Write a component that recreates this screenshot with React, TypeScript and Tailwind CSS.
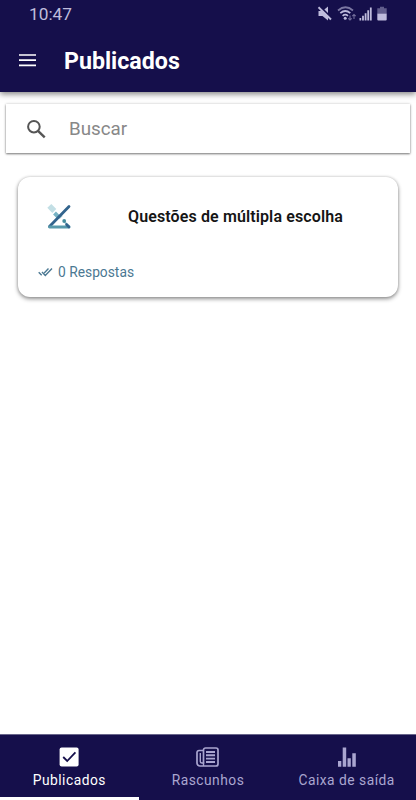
import React, { useState } from "react";

const TABS = [
  { id: "published", label: "Publicados", Icon: CheckboxIcon },
  { id: "drafts", label: "Rascunhos", Icon: NewspaperIcon },
  { id: "outbox", label: "Caixa de saída", Icon: StatsIcon },
];

function CheckboxIcon() {
  return (
    <svg className="h-5 w-5" viewBox="0 0 20 20" fill="none">
      <rect x="0.6" y="0.4" width="19" height="19.2" rx="2" fill="currentColor" />
      <path d="M4.2 10l4 4 8.2-8.6" stroke="#150f4b" strokeWidth="1.8" />
    </svg>
  );
}

function NewspaperIcon() {
  return (
    <svg className="h-5 w-[23px]" viewBox="0 0 23 20" fill="none" stroke="currentColor">
      <path d="M7.5 16.5V3a2 2 0 012-2H20a2 2 0 012 2v14a2 2 0 01-2 2H4a3 3 0 01-3-3V5.5a2 2 0 012-2h4.5" strokeWidth="1.7" />
      <path d="M4.3 6v8.5q0 1.500 1.600 1.500h1.600v3" strokeWidth="1.4" />
      <path d="M10 5h9M10 8.300h9M10 11.600h9M10 15h9" strokeWidth="1.9" />
    </svg>
  );
}

function StatsIcon() {
  return (
    <svg className="h-5 w-5" viewBox="0 0 20 20" fill="currentColor">
      <path d="M1 14h3.300v5.700H1zM5.700.5h3.500v19.200H5.700zM10.500 11.200h3.300v8.500h-3.300zM15.300 6.200h3.500v13.500h-3.500z" />
    </svg>
  );
}

function StatusBar() {
  return (
    <div className="flex h-7 items-center justify-between pl-[29px] pr-[28px] text-[#bfbcdc]">
      <span className="text-[17.3px] leading-7">10:47</span>
      <svg className="h-7 w-[74px]" viewBox="314 0 74 28" fill="currentColor">
        <path d="M318.500 11h4l5.500-4.500v14l-5.500-4.500h-4z" />
        <path d="M319.500 6l12 12" stroke="#150f4b" strokeWidth="2" />
        <path d="M318.500 7.300l12.500 12.200" stroke="currentColor" strokeWidth="1.9" />
        <g fill="none" stroke="currentColor" strokeWidth="1.7">
          <path d="M338 10.500q7.500-6.500 15 0" opacity=".6" />
          <path d="M340.300 13.200q5-4.400 10 0M342.600 15.800q2.700-2.200 5.400 0" />
        </g>
        <circle cx="345.2" cy="18.3" r="1.5" />
        <path
          d="M350 15.500V20M348.300 18.300l1.700 1.700 1.700-1.700M354 19v-4.500M352.300 16.200l1.700-1.700 1.700 1.700"
          fill="none"
          stroke="currentColor"
          strokeWidth="1.1"
          opacity=".55"
        />
        <path d="M359.500 18h1.700v2.500h-1.700zM362.100 15.800h1.800v4.700h-1.800zM364.700 13.300h1.800v7.200h-1.800zM367.300 10.300h1.800v10.200h-1.800zM369.900 7.500h1.800v13h-1.800z" />
        <path d="M377.300 8.300h2.700V6.800h4v1.500h2.700v5.200h-9.400z" opacity=".45" />
        <path d="M377.300 13.500h9.400v6q0 1-1 1h-7.400q-1 0-1-1z" />
      </svg>
    </div>
  );
}

function FormLogo() {
  return (
    <svg className="mb-0.5 h-[26px] w-[26px]" viewBox="46 203 26 26" fill="none">
      <path d="M47.300 207.800l4-3.800 5 5-4 4z" fill="#c3dfe5" />
      <path d="M54.500 213l4.500 4.500" stroke="#78b3c4" strokeWidth="4" />
      <path d="M59 218.300l3-3" stroke="#a5cbd4" strokeWidth="2" />
      <path d="M49.500 226.500l19.500-20" stroke="#32648d" strokeWidth="2.8" strokeLinecap="round" />
      <path d="M64.500 222l5 4.500" stroke="#a5cbd4" strokeWidth="1.8" />
      <circle cx="64.2" cy="221" r="1.9" fill="#458d9d" />
      <path d="M49.500 227H69" stroke="#5799ab" strokeWidth="2.9" strokeLinecap="round" />
      <path d="M66.500 224.500l2.500 2.500" stroke="#32648d" strokeWidth="2.6" strokeLinecap="round" />
    </svg>
  );
}

function FormCard({ title, answers }: { title: string; answers: number }) {
  return (
    <article className="mx-[18px] mt-6 h-[120px] rounded-xl bg-white shadow-[0_2px_4px_rgba(0,0,0,0.42),0_0_3px_rgba(0,0,0,0.18)]">
      <div className="flex h-20 items-center pl-7">
        <FormLogo />
        <h2 className="ml-14 whitespace-nowrap text-[16px] font-semibold tracking-[0.12px] text-[#151515]">{title}</h2>
      </div>
      <div className="flex h-[30px] items-center gap-[5px] pl-5 text-[#4b7892]">
        <svg className="h-3.5 w-[15px]" viewBox="0 0 15 14" fill="none" stroke="currentColor" strokeWidth="1.4">
          <path d="M.7 7.200l3 3M4 7l3.300 3.400 6.700-6.900M6.200 7.900l4.300-4.400" />
        </svg>
        <span className="text-[13.8px]">{answers} Respostas</span>
      </div>
    </article>
  );
}

export default function App() {
  const [active, setActive] = useState("published");
  const [query, setQuery] = useState("");

  return (
    <div className="flex h-screen w-full flex-col overflow-hidden bg-white font-['Roboto',sans-serif]">
      <header className="z-10 h-[92px] shrink-0 bg-[#150f4b] shadow-[0_2px_6px_rgba(0,0,0,0.5)]">
        <StatusBar />
        <div className="flex h-16 items-center pl-[19px] text-white">
          <button aria-label="Menu">
            <svg className="h-4 w-[17px]" viewBox="0 0 17 16" stroke="currentColor" strokeWidth="1.7">
              <path d="M0 3h17M0 8.200h17M0 13.400h17" />
            </svg>
          </button>
          <h1 className="ml-7 pt-[3px] text-[23.2px] font-bold">Publicados</h1>
        </div>
      </header>

      <main className="flex-1">
        <div className="mx-1.5 mt-3 flex h-[49px] items-center bg-white pl-5 shadow-[0_1px_2px_rgba(0,0,0,0.5),0_0_3px_rgba(0,0,0,0.15)]">
          <svg className="h-5 w-5 shrink-0" viewBox="0 0 20 20" fill="none" stroke="#555" strokeWidth="2">
            <circle cx="7.9" cy="7.7" r="5.8" />
            <path d="M12 11.800l6.700 6.500" strokeWidth="2.4" />
          </svg>
          <input
            className="ml-[23px] w-full bg-transparent pt-px text-[18.8px] outline-none placeholder:text-[#888]"
            placeholder="Buscar"
            value={query}
            onChange={(e) => setQuery(e.target.value)}
          />
        </div>
        <FormCard title="Questões de múltipla escolha" answers={0} />
      </main>

      <nav className="grid h-[66px] shrink-0 grid-cols-3 border-t border-[#69668b] bg-[#150f4b]">
        {TABS.map(({ id, label, Icon }) => (
          <button
            key={id}
            onClick={() => setActive(id)}
            className={`flex flex-col items-center border-b-[3px] pt-[12px] ${
              active === id ? "border-white text-white" : "border-transparent text-[#aaa6d0]"
            }`}
          >
            <Icon />
            <span className="mt-[3px] whitespace-nowrap text-[13.8px] leading-5 tracking-[0.5px]">{label}</span>
          </button>
        ))}
      </nav>
    </div>
  );
}
